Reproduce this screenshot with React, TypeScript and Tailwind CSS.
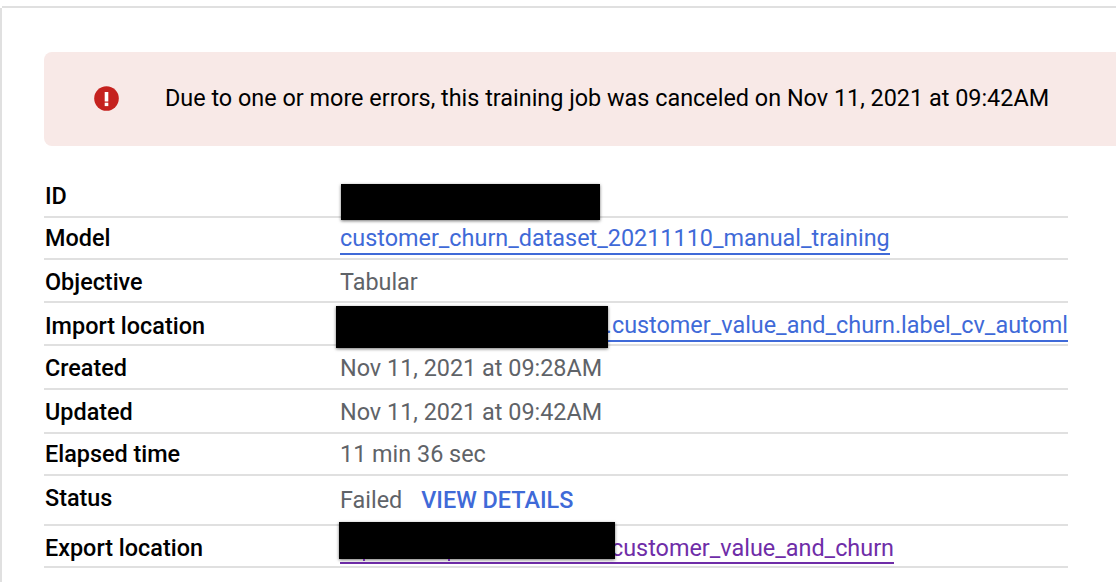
const ROBOTO = "font-['Roboto',sans-serif]";

function Row({ label, h, pt, children }: { label: string; h: string; pt: string; children?: React.ReactNode }) {
  return (
    <div className={`relative flex items-start border-b-2 border-[#e0e0e0] text-[23.4px] leading-7 ${h} ${pt}`}>
      <div className="w-[296px] pl-px font-medium text-black">{label}</div>
      <div className="flex-1 whitespace-nowrap text-[#5f6368]">{children}</div>
    </div>
  );
}

function Redact({ className }: { className: string }) {
  return <div className={`absolute z-10 bg-black shadow-[0_1px_3px_rgba(0,0,0,0.55)] ${className}`} />;
}

export default function App() {
  return (
    <div className={`h-[582px] w-[1116px] overflow-hidden bg-white ${ROBOTO}`}>
      <div className="ml-0.5 h-2 border-b-2 border-[#e0e0e0]" />
      <div className="h-[574px] border-l-2 border-[#e0e0e0] pl-[42px] pt-11">
        <div className="flex h-[94px] w-[1100px] items-center rounded-l-lg bg-[#f8e9e7]">
          <svg viewBox="0 0 25 25" className="ml-[49.5px] -mt-[2px] h-[25px] w-[25px] shrink-0">
            <circle cx="12.5" cy="12.5" r="12.3" fill="#c5221f" />
            <rect x="10.7" y="6" width="3.6" height="9.5" fill="#fff" />
            <rect x="10.7" y="16.7" width="3.6" height="3.4" fill="#fff" />
          </svg>
          <div className="ml-[46.5px] -mt-px whitespace-nowrap text-[23.4px] text-black">
            Due to one or more errors, this training job was canceled on Nov 11, 2021 at 09:42AM
          </div>
        </div>

        <div className="mt-7 w-[1024px]">
          <Row label="ID" h="h-[44px]" pt="pt-2">
            <Redact className="top-[10px] left-[297px] h-[36px] w-[259px]" />
          </Row>
          <Row label="Model" h="h-[42px]" pt="pt-1.5">
            <span className="inline-block h-[30px] border-b-2 border-[#3f6ad8] leading-[27px] text-[#3f6ad8]">
              customer_churn_dataset_20211110_manual_training
            </span>
          </Row>
          <Row label="Objective" h="h-[43px]" pt="pt-2">Tabular</Row>
          <Row label="Import location" h="h-[43px]" pt="pt-[9px]">
            <div className="h-[30px] border-b-2 border-[#3f6ad8] text-right leading-[27px] text-[#3f6ad8]">
              .customer_value_and_churn.label_cv_automl
            </div>
            <Redact className="top-[3px] left-[292px] h-[42px] w-[272px]" />
          </Row>
          <Row label="Created" h="h-[44px]" pt="pt-2">Nov 11, 2021 at 09:28AM</Row>
          <Row label="Updated" h="h-[44px]" pt="pt-2">Nov 11, 2021 at 09:42AM</Row>
          <Row label="Elapsed time" h="h-[42px]" pt="pt-1.5">11 min 36 sec</Row>
          <Row label="Status" h="h-[50px]" pt="pt-2">
            <div className="mt-0.5 flex">
              <span>Failed</span>
              <span className="ml-[19px] font-medium text-[#3f6ad8]">VIEW DETAILS</span>
            </div>
          </Row>
          <Row label="Export location" h="h-[42px]" pt="pt-2">
            <div className="h-[30px] w-[554px] border-b-2 border-[#6f2da8] text-right leading-[29px] text-[#6f2da8]">
              customer_value_and_churn
            </div>
            <Redact className="-top-[4px] left-[295px] h-[37px] w-[276px]" />
            <span className="absolute top-[33px] left-[319px] z-20 h-0.5 w-0.5 bg-[#6f2da8]" />
            <span className="absolute top-[33px] left-[404px] z-20 h-0.5 w-0.5 bg-[#6f2da8]" />
          </Row>
        </div>
      </div>
    </div>
  );
}
